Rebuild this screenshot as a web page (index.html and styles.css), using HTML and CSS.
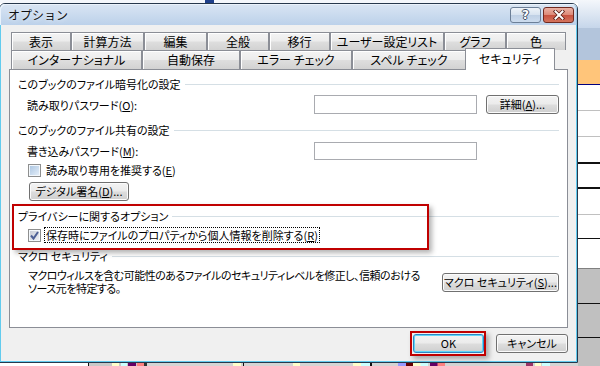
FILE: index.html
```html
<html>
<head>
    <meta http-equiv="Content-Type" content="text/html; charset=UTF-8" />
    <title>オプション</title>
    <link rel="stylesheet" href="styles.css">
</head>
<body>

<!-- spreadsheet showing behind the dialog -->
<div class="sheetTop"></div>
<div class="sheetCol">
    <div class="sc hdrA"></div>
    <div class="sc hdrB"></div>
    <div class="sc orange"></div>
    <div class="sc c1"></div>
    <div class="sc c2"></div>
    <div class="sc c3"></div>
    <div class="sc c4"></div>
    <div class="sc c5"></div>
    <div class="sc c6"></div>
    <div class="sc c7"></div>
    <div class="sc g1"></div>
    <div class="sc g2"></div>
    <div class="sc g3"></div>
</div>
<div class="sheetBottom"></div>

<div class="dlg">
    <div class="caption">
        <span class="captionText">オプション</span>
        <div class="capBtn help">?</div>
        <div class="capBtn close">
            <svg width="14" height="10" viewBox="0 0 14 10">
                <path d="M3.5 1.5 L10.5 8.5 M10.5 1.5 L3.5 8.5" stroke="#5a2018" stroke-width="3.6" stroke-linecap="square"/>
                <path d="M3.5 1.5 L10.5 8.5 M10.5 1.5 L3.5 8.5" stroke="#fff" stroke-width="2" stroke-linecap="square"/>
            </svg>
        </div>
    </div>

    <div class="client">
        <div class="tabRow row1">
            <div class="tab">表示</div>
            <div class="tab">計算方法</div>
            <div class="tab">編集</div>
            <div class="tab">全般</div>
            <div class="tab">移行</div>
            <div class="tab">ユーザー設定リスト</div>
            <div class="tab">グラフ</div>
            <div class="tab">色</div>
        </div>
        <div class="tabRow row2">
            <div class="tab">インターナショナル</div>
            <div class="tab">自動保存</div>
            <div class="tab">エラー チェック</div>
            <div class="tab">スペル チェック</div>
            <div class="tab sel">セキュリティ</div>
        </div>

        <div class="panel">
            <div class="grpHead">このブックのファイル暗号化の設定</div>
            <div class="fieldRow first">
                <span>読み取りパスワード(<u>O</u>):</span>
                <div class="txt"></div>
                <div class="btn">詳細(<u>A</u>)...</div>
            </div>

            <div class="grpHead h2">このブックのファイル共有の設定</div>
            <div class="fieldRow second">
                <span>書き込みパスワード(<u>M</u>):</span>
                <div class="txt"></div>
                <div></div>
            </div>
            <div class="checkRow">
                <span class="cb"></span>
                <span>読み取り専用を推奨する(<u>E</u>)</span>
            </div>
            <div class="btn sign">デジタル署名(<u>D</u>)...</div>

            <div class="grpHead h3">プライバシーに関するオプション</div>
            <div class="checkRow privacy">
                <span class="cb checked">
                    <svg width="11" height="11" viewBox="0 0 11 11">
                        <path d="M2 5.5 L4.5 8.5 L9 2" fill="none" stroke="#4c5f96" stroke-width="2"/>
                    </svg>
                </span>
                <span class="focusRect">保存時にファイルのプロパティから個人情報を削除する(<u>R</u>)</span>
            </div>

            <div class="grpHead h4">マクロ セキュリティ</div>
            <div class="macroRow">
                <div class="desc">マクロウィルスを含む可能性のあるファイルのセキュリティレベルを修正し、信頼のおける<br>ソース元を特定する。</div>
                <div class="btn macroBtn">マクロ セキュリティ(<u>S</u>)...</div>
            </div>
        </div>

        <div class="footer">
            <div class="btn ok">OK</div>
            <div class="btn">キャンセル</div>
        </div>
    </div>
</div>

<!-- red highlight boxes drawn over the screenshot -->
<div class="mark markPrivacy"></div>
<div class="mark markOk"></div>

</body>
</html>
```

FILE: styles.css
```css
        html, body {
            width: 600px;
            height: 366px;
        }

        body {
            margin: 0;
            position: relative;
            overflow: hidden;
            background: #fff;
            font-size: 11px;
            font-family: "Noto Sans CJK JP", sans-serif;
            font-feature-settings: "palt";
            color: #000;
        }

        u {
            text-decoration: underline;
            text-underline-offset: 1px;
        }

        /* sheet behind the dialog */
        .sheetTop {
            position: absolute;
            left: 0;
            top: 0;
            width: 600px;
            height: 3px;
            background: linear-gradient(to right, #f4f7fb 0, #f4f7fb 205px, #1d3f8a 205px, #1d3f8a 214px, #f4f7fb 214px);
        }

        .sheetCol {
            position: absolute;
            left: 578px;
            top: 0;
            width: 22px;
            height: 366px;
            display: flex;
            flex-direction: column;
        }

        .sc {
            box-sizing: border-box;
            flex: none;
            background: #fff;
        }

        .hdrA { height: 28px; background: linear-gradient(#f4f7fb, #c6d6ea); }
        .hdrB { height: 32px; background: #b3c5dc; }
        .orange { height: 25px; background: #ffc57a; border-bottom: 1px solid #000080; }
        .c1 { height: 26px; border-bottom: 1px solid #c0c0c0; }
        .c2 { height: 26px; border-bottom: 1px solid #c0c0c0; }
        .c3 { height: 27px; border-bottom: 2px solid #111; }
        .c4 { height: 25px; border-bottom: 2px solid #111; }
        .c5 { height: 26px; border-bottom: 1px solid #c0c0c0; }
        .c6 { height: 24px; border-bottom: 1px solid #111; }
        .c7 { height: 30px; border-bottom: 1px solid #808080; }
        .g1 { height: 35px; background: #c0c0c0; border-bottom: 1px solid #111; }
        .g2 { height: 34px; background: #c0c0c0; border-bottom: 1px solid #111; }
        .g3 { flex: 1; background: #c0c0c0; }

        .sheetBottom {
            position: absolute;
            left: 0;
            top: 363px;
            width: 578px;
            height: 3px;
            background: linear-gradient(to right,
                #fff 0, #fff 88px, #111 88px, #111 89px, #c8c8c8 89px, #c8c8c8 112px,
                #ffffcc 112px, #ffffcc 119px, #c8c8c8 119px, #c8c8c8 121px,
                #ccffff 121px, #ccffff 127px, #c8c8c8 127px, #c8c8c8 128px,
                #660066 128px, #660066 136px, #c8c8c8 136px, #c8c8c8 137px,
                #ff8080 137px, #ff8080 144px, #333 144px, #333 147px,
                #d4d4d4 147px, #d4d4d4 233px, #ffffcc 233px, #ffffcc 241px,
                #d4d4d4 241px, #d4d4d4 243px, #111 243px, #111 244px,
                #d4d4d4 244px, #d4d4d4 293px, #ffffcc 293px, #ffffcc 300px,
                #d4d4d4 300px, #d4d4d4 353px, #ffffcc 353px, #ffffcc 361px,
                #ccffff 361px, #ccffff 370px, #111 370px, #111 372px,
                #d4d4d4 372px, #d4d4d4 398px, #9999ff 398px, #9999ff 406px,
                #660000 406px, #660000 413px, #ffffcc 413px, #ffffcc 420px,
                #ccffff 421px, #ccffff 428px, #d4d4d4 428px, #d4d4d4 430px,
                #660066 430px, #660066 437px, #ff8080 438px, #ff8080 445px,
                #d4d4d4 445px, #d4d4d4 526px, #993366 526px, #993366 533px,
                #d4d4d4 533px, #d4d4d4 535px, #ffffcc 535px, #ffffcc 541px,
                #d4d4d4 541px, #d4d4d4 542px, #ccffff 542px, #ccffff 550px,
                #d4d4d4 550px);
        }

        /* dialog window */
        .dlg {
            position: absolute;
            left: -1px;
            top: 3px;
            width: 579px;
            height: 360px;
            box-sizing: border-box;
            border: 1px solid #26384c;
            border-radius: 6px 6px 0 0;
            background: #f0f0f0;
            box-shadow: inset 0 0 0 1px #62cbee;
            display: flex;
            flex-direction: column;
        }

        .caption {
            height: 21px;
            flex: none;
            display: flex;
            align-items: flex-start;
            padding: 3px 3px 0 8px;
            box-sizing: border-box;
            background: linear-gradient(#d9e5f3, #bcd1ea);
            border-radius: 5px 5px 0 0;
            box-shadow: inset 1px 1px 0 #eaf2fb, inset -1px 0 0 #9cc3e0;
        }

        .captionText {
            flex: 1;
            font-size: 12px;
            line-height: 16px;
            font-feature-settings: normal;
            color: #111;
            text-shadow: 0 0 4px #eef4fb;
        }

        .capBtn {
            width: 31px;
            height: 16px;
            box-sizing: border-box;
            border-radius: 3px;
            display: flex;
            align-items: center;
            justify-content: center;
        }

        .help {
            margin-right: 2px;
            border: 1px solid #6c7f97;
            background: linear-gradient(#eef3f9 0%, #d8e3f0 48%, #bfd0e5 52%, #cddcee 100%);
            font-family: "DejaVu Sans", sans-serif;
            font-weight: bold;
            font-size: 12px;
            line-height: 14px;
            color: #fff;
            text-shadow: 1px 0 0 #3b4d63, -1px 0 0 #3b4d63, 0 1px 0 #3b4d63, 0 -1px 0 #3b4d63;
        }

        .close {
            border: 1px solid #70291f;
            background: linear-gradient(#eab2a5 0%, #dd8a78 48%, #c7513f 52%, #d4745d 100%);
        }

        .client {
            flex: 1;
            padding: 7px 9px 0 9px;
        }

        /* tabs */
        .tabRow {
            display: grid;
            margin-left: 2px;
        }

        .row1 {
            grid-template-columns: 60px 73px 63px 62px 61px 114px 62px 60px;
            height: 18px;
        }

        .row2 {
            grid-template-columns: 131px 98px 112px 114px 87px;
            height: 19px;
        }

        .tab {
            box-sizing: border-box;
            border: 1px solid #8b8e96;
            border-bottom: none;
            background: linear-gradient(#f4f4f4 0%, #ececec 48%, #dedede 52%, #d2d2d2 100%);
            box-shadow: inset 1px 1px 0 #fff;
            text-align: center;
            font-size: 12px;
            line-height: 17px;
            white-space: nowrap;
        }

        .row2 .tab {
            line-height: 18px;
        }

        .tab.sel {
            margin: -2px -2px -1px -1px;
            background: #fff;
            box-shadow: none;
            line-height: 20px;
            z-index: 2;
        }

        /* page of the selected tab */
        .panel {
            height: 259px;
            box-sizing: border-box;
            border: 1px solid #8b8e96;
            background: #fff;
            padding: 7px 8px 0 8px;
        }

        .grpHead {
            display: flex;
            align-items: center;
            height: 14px;
            line-height: 14px;
            white-space: nowrap;
        }

        .grpHead::after {
            content: '';
            flex: 1;
            height: 1px;
            margin-left: 4px;
            background: #d5dfe5;
        }

        .h2 { margin-top: 9px; }
        .h3 { margin-top: 8px; }
        .h4 { margin-top: 6px; }

        .fieldRow {
            display: grid;
            grid-template-columns: 1fr 163px 73px;
            column-gap: 9px;
            align-items: center;
            padding-left: 9px;
        }

        .fieldRow.first {
            margin-top: 4px;
            height: 19px;
        }

        .fieldRow.second {
            margin-top: 5px;
            height: 18px;
        }

        .txt {
            height: 100%;
            box-sizing: border-box;
            border: 1px solid #a9abb0;
            background: #fff;
        }

        .btn {
            height: 19px;
            box-sizing: border-box;
            border: 1px solid #707070;
            border-radius: 3px;
            background: linear-gradient(#f3f3f3 0%, #ebebeb 48%, #dddddd 52%, #cfcfcf 100%);
            box-shadow: inset 0 0 0 1px #fbfbfb;
            text-align: center;
            line-height: 17px;
            white-space: nowrap;
        }

        .checkRow {
            display: flex;
            align-items: center;
            gap: 5px;
            padding-left: 10px;
            margin-top: 3px;
            height: 14px;
        }

        .cb {
            width: 13px;
            height: 13px;
            flex: none;
            box-sizing: border-box;
            border: 1px solid #8e8f8f;
            background: linear-gradient(135deg, #a8c3e0, #e9f2fb);
            box-shadow: inset 0 0 0 1px #f4f8fc;
        }

        .cb.checked {
            background: linear-gradient(135deg, #c3c8d4, #f1f2f6);
            display: flex;
            align-items: center;
            justify-content: center;
        }

        .sign {
            width: 100px;
            margin: 5px 0 0 11px;
        }

        .checkRow.privacy {
            margin-top: 4px;
            height: 16px;
            gap: 3px;
        }

        .focusRect {
            border: 1px dotted #000;
            padding: 0 1px;
            line-height: 14px;
        }

        .macroRow {
            display: flex;
            align-items: center;
            margin-top: 6px;
            padding-left: 10px;
        }

        .desc {
            flex: 1;
            min-width: 0;
            line-height: 13px;
            letter-spacing: -0.5px;
            white-space: nowrap;
        }

        .macroBtn {
            width: 117px;
            flex: none;
        }

        .footer {
            display: flex;
            justify-content: flex-end;
            gap: 12px;
            margin-top: 6px;
        }

        .footer .btn {
            width: 72px;
        }

        .btn.ok {
            width: 71px;
            border-color: #2f86c4;
            box-shadow: inset 0 0 0 1px #5fd6f7;
        }

        /* red annotation boxes */
        .mark {
            position: absolute;
            border: 2px solid #c00000;
            box-shadow: 3px 3px 5px rgba(0, 0, 0, 0.3);
        }

        .markPrivacy {
            left: 12px;
            top: 204px;
            width: 413px;
            height: 42px;
        }

        .markOk {
            left: 410px;
            top: 331px;
            width: 72px;
            height: 21px;
        }
```
